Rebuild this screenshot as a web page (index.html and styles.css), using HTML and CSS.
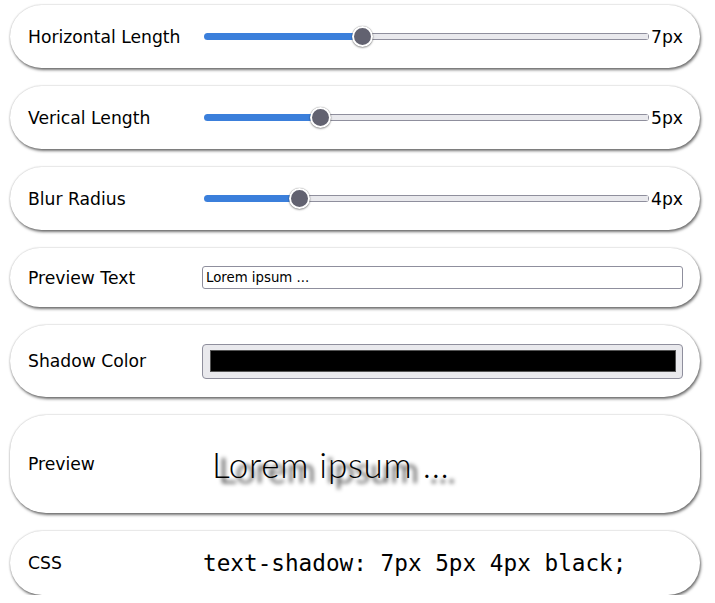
FILE: index.html
```html
<!DOCTYPE html>
<html lang="en">
<head>
<meta charset="utf-8">
<title>Text Shadow Generator</title>
<link rel="stylesheet" href="styles.css">
</head>
<body>
<main class="panel">
  <section class="card card-slider">
    <label class="label" for="h">Horizontal Length</label>
    <div class="control">
      <input class="range" id="h" type="range" min="0" max="20" value="7" style="--v:0.35">
      <span class="value">7px</span>
    </div>
  </section>
  <section class="card card-slider">
    <label class="label" for="v">Verical Length</label>
    <div class="control">
      <input class="range" id="v" type="range" min="0" max="20" value="5" style="--v:0.25">
      <span class="value">5px</span>
    </div>
  </section>
  <section class="card card-slider">
    <label class="label" for="b">Blur Radius</label>
    <div class="control">
      <input class="range" id="b" type="range" min="0" max="20" value="4" style="--v:0.2">
      <span class="value">4px</span>
    </div>
  </section>
  <section class="card card-text">
    <label class="label" for="t">Preview Text</label>
    <div class="control">
      <input class="text-input" id="t" type="text" value="Lorem ipsum ...">
    </div>
  </section>
  <section class="card card-color">
    <label class="label" for="c">Shadow Color</label>
    <div class="control">
      <div class="color-input" id="c"><span class="swatch"></span></div>
    </div>
  </section>
  <section class="card card-preview">
    <span class="label">Preview</span>
    <div class="control">
      <p class="preview-text">Lorem ipsum ...</p>
    </div>
  </section>
  <section class="card card-css">
    <span class="label">CSS</span>
    <div class="control">
      <code class="css-code">text-shadow: 7px 5px 4px black;</code>
    </div>
  </section>
</main>
</body>
</html>
```
FILE: styles.css
```css
* { box-sizing: border-box; }

html, body {
  margin: 0;
  padding: 0;
  background: #ffffff;
}

body {
  font-family: "DejaVu Sans", Verdana, sans-serif;
  color: #000;
}

.panel {
  display: flex;
  flex-direction: column;
  gap: 18px;
  width: 690px;
  margin: 5px 0 0 10px;
}

.card {
  display: grid;
  grid-template-columns: 174px 1fr;
  align-items: center;
  padding: 19px 17px 19px 18px;
  background: #fff;
  border-radius: 36px;
  box-shadow: 1px 2px 3px rgba(0, 0, 0, 0.55), 0 0 2px rgba(0, 0, 0, 0.25);
}

.label {
  font-size: 17.2px;
  line-height: 20px;
  white-space: nowrap;
}

.control {
  display: flex;
  align-items: center;
  min-width: 0;
}

.card-slider .control { height: 25px; }
.card-text .control { height: 21px; }
.card-color .control { height: 34px; }
.card-preview .control { height: 60px; }
.card-css .control { height: 26px; }

/* range slider */
.range {
  -webkit-appearance: none;
  appearance: none;
  flex: 1;
  min-width: 0;
  margin: 0 2px;
  height: 20px;
  background: transparent;
}

.range::-webkit-slider-runnable-track {
  height: 7px;
  border-radius: 4px;
  background:
    linear-gradient(#3b7fdb, #3b7fdb) left center / calc(10px + (100% - 20px) * var(--v)) 100% no-repeat,
    linear-gradient(#e9e9ed, #e9e9ed) center / calc(100% - 2px) calc(100% - 2px) no-repeat,
    #8f8f9d;
}

.range::-webkit-slider-thumb {
  -webkit-appearance: none;
  appearance: none;
  width: 21px;
  height: 21px;
  margin-top: -7px;
  border-radius: 50%;
  background: #626270;
  border: 2px solid #fff;
  box-shadow: 0 0 1px rgba(0, 0, 0, 0.5), 0 1px 2px rgba(0, 0, 0, 0.35);
}

.value {
  font-size: 17.2px;
  line-height: 20px;
}

/* text input */
.text-input {
  width: 100%;
  height: 23px;
  padding: 0 3px;
  margin: 0;
  border: 1px solid #8f8f9d;
  border-radius: 3px;
  font-family: "DejaVu Sans", sans-serif;
  font-size: 13.3px;
  color: #000;
  background: #fff;
  outline: none;
}

/* color input */
.color-input {
  width: 100%;
  height: 35px;
  padding: 5px 6px 6px 7px;
  border: 1px solid #8f8f9d;
  border-radius: 4px;
  background: #e9e9ed;
  display: flex;
}

.swatch {
  flex: 1;
  background: #000;
  border: 1px solid #555;
}

/* preview */
.preview-text {
  margin: 0 0 0 10px;
  font-family: Lato, "Open Sans", sans-serif;
  font-weight: 300;
  font-size: 35px;
  letter-spacing: 0.75px;
  line-height: 40px;
  text-shadow: 7px 5px 4px black;
  white-space: nowrap;
}

/* css output */
.css-code {
  font-family: "DejaVu Sans Mono", monospace;
  font-size: 22.7px;
  line-height: 26px;
  margin-left: 1px;
}
```
